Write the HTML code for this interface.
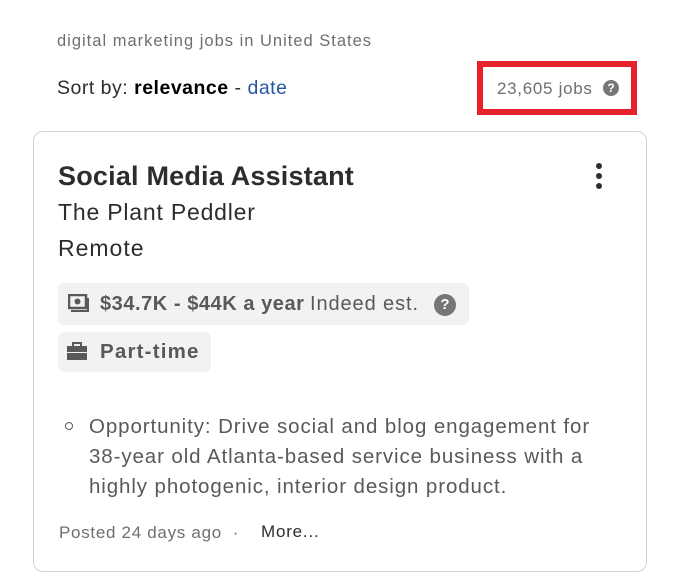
<!DOCTYPE html>
<html><head><meta charset="utf-8"><style>
*{margin:0;padding:0;box-sizing:border-box}
body{width:680px;height:581px;background:#fff;font-family:"Liberation Sans",sans-serif;position:relative;overflow:hidden;color:#2d2d2d}
.a{position:absolute;white-space:nowrap}
</style></head><body>
<div class="a" style="left:57px;top:32px;font-size:16.5px;color:#6f6f6f;letter-spacing:1px">digital marketing jobs in United States</div>
<div class="a" style="left:57px;top:77px;font-size:19.5px;color:#2d2d2d;letter-spacing:0.5px">Sort by: <b style="color:#000">relevance</b> - <span style="color:#2557a7">date</span></div>
<div class="a" style="left:477px;top:61px;width:160px;height:54px;border:6px solid #e8202a"></div>
<div class="a" style="left:497px;top:79px;font-size:17px;color:#6f6f6f;letter-spacing:0.7px">23,605 jobs</div>
<div class="a" style="left:603px;top:80px;width:16px;height:16px;border-radius:50%;background:#767676;color:#fff;font-size:12px;font-weight:bold;text-align:center;line-height:16px">?</div>
<div class="a" style="left:33px;top:131px;width:614px;height:441px;border:1px solid #d4d2d0;border-radius:10px"></div>
<div class="a" style="left:58px;top:161px;font-size:27px;font-weight:bold;color:#2d2d2d;letter-spacing:0.2px">Social Media Assistant</div>
<div class="a" style="left:596px;top:163px;width:6px;height:6px;border-radius:50%;background:#2d2d2d"></div>
<div class="a" style="left:596px;top:173px;width:6px;height:6px;border-radius:50%;background:#2d2d2d"></div>
<div class="a" style="left:596px;top:183px;width:6px;height:6px;border-radius:50%;background:#2d2d2d"></div>
<div class="a" style="left:58px;top:199px;font-size:23px;letter-spacing:0.8px">The Plant Peddler</div>
<div class="a" style="left:58px;top:235px;font-size:23px;letter-spacing:1px">Remote</div>
<div class="a" style="left:58px;top:283px;width:411px;height:42px;background:#f3f2f1;border-radius:6px"></div>
<svg class="a" style="left:68px;top:294px" width="22" height="20" viewBox="0 0 22 20"><rect x="1" y="1" width="17" height="13" fill="none" stroke="#595959" stroke-width="2.5"/><circle cx="9.5" cy="7.5" r="3" fill="#595959"/><path d="M3 17H20V4" fill="none" stroke="#595959" stroke-width="2"/></svg>
<div class="a" style="left:100px;top:293px;font-size:20px;color:#595959"><b style="letter-spacing:0.55px">$34.7K - $44K a year</b> <span style="letter-spacing:0.9px">Indeed est.</span></div>
<div class="a" style="left:434px;top:294px;width:22px;height:22px;border-radius:50%;background:#767676;color:#fff;font-size:15px;font-weight:bold;text-align:center;line-height:22px">?</div>
<div class="a" style="left:58px;top:332px;width:153px;height:40px;background:#f3f2f1;border-radius:6px"></div>
<svg class="a" style="left:66px;top:341px" width="22" height="20" viewBox="0 0 22 20"><path d="M7 5V2H15V5" fill="none" stroke="#595959" stroke-width="2"/><rect x="1" y="5" width="20" height="6" fill="#595959"/><rect x="1" y="12" width="20" height="7" fill="#595959"/></svg>
<div class="a" style="left:100px;top:340px;font-size:20.5px;font-weight:bold;color:#595959;letter-spacing:1.2px">Part-time</div>
<div class="a" style="left:65px;top:422px;width:8px;height:8px;border-radius:50%;border:1.3px solid #595959"></div>
<div class="a" style="left:89px;top:412px;font-size:20.5px;line-height:30px;color:#595959;letter-spacing:0.9px">Opportunity: Drive social and blog engagement for<br>38-year old Atlanta-based service business with a<br>highly photogenic, interior design product.</div>
<div class="a" style="left:59px;top:523px;font-size:17px;color:#6f6f6f;letter-spacing:0.7px">Posted 24 days ago&nbsp;&nbsp;·</div>
<div class="a" style="left:261px;top:522px;font-size:17px;color:#2d2d2d;letter-spacing:0.8px">More...</div>
</body></html>
